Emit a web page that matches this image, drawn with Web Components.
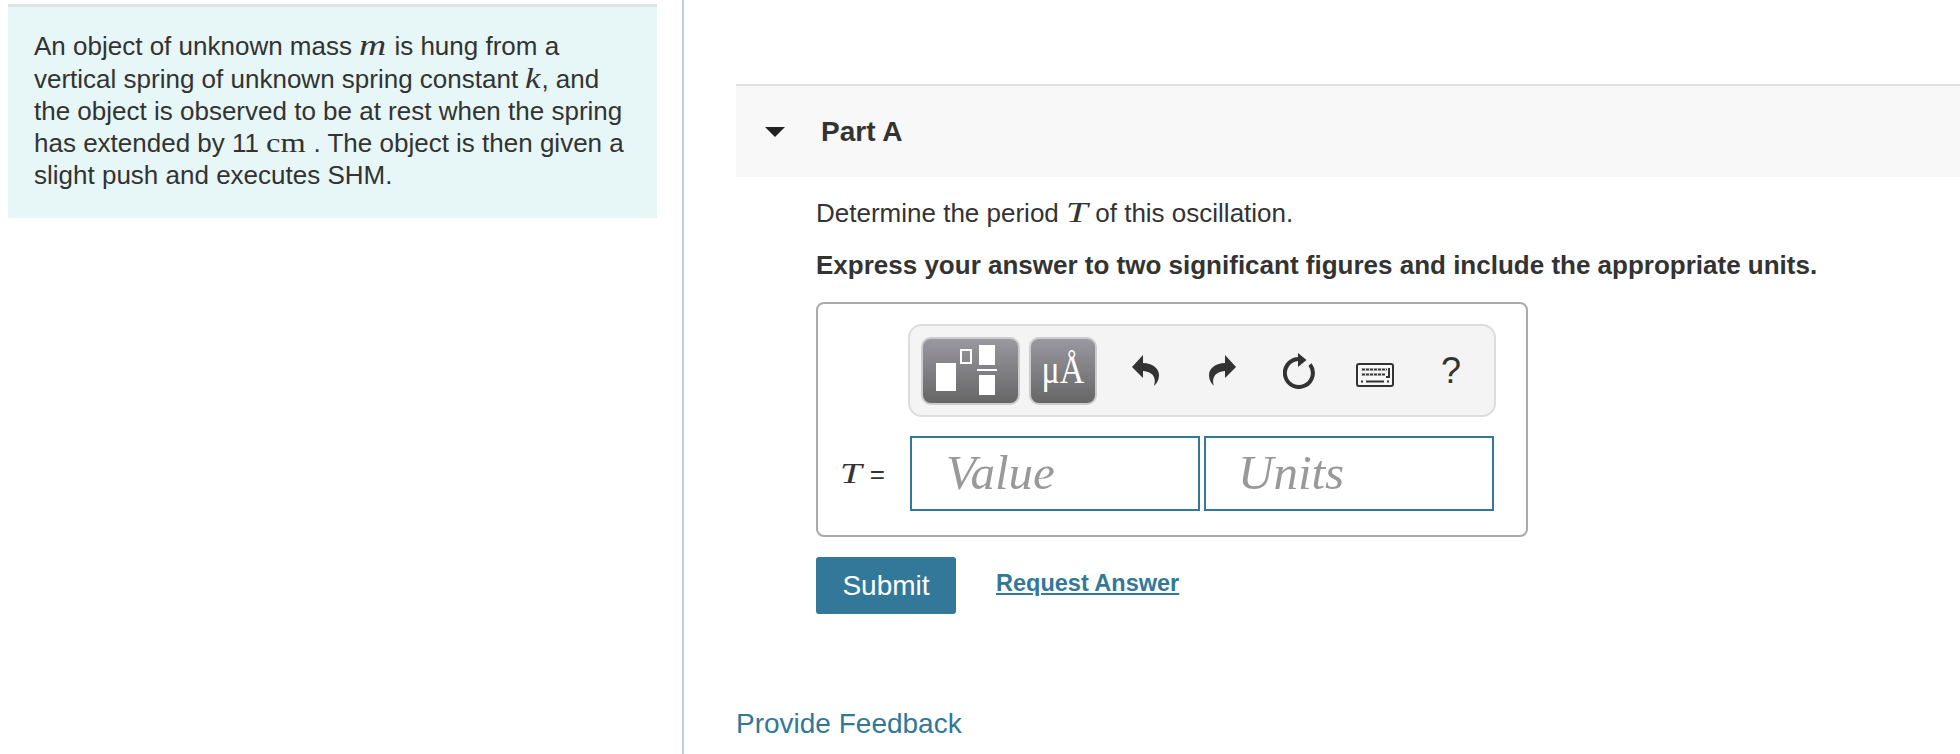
<!DOCTYPE html>
<html>
<head>
<meta charset="utf-8">
<style>
html,body{margin:0;padding:0;background:#fff;height:100%}
body{font-family:"Liberation Sans",Arial,sans-serif;color:#333;overflow:hidden}
</style>
</head>
<body>
<quiz-page>
   <intro-panel slot="left">An object of unknown mass <math-var style="--w:28px;--sx:1.3">m</math-var> is hung from a vertical spring of unknown spring constant <math-var style="--w:16px;--sx:1.2">k</math-var>, and the object is observed to be at rest when the spring has extended by 11 <math-var upright style="--w:40px;--sx:1.2">cm</math-var> . The object is then given a slight push and executes SHM.</intro-panel>
   <part-panel slot="right" title-text="Part A">
      <p-text>Determine the period <math-var style="--w:22px;--sx:1.35">T</math-var> of this oscillation.</p-text>
      <p-text strong>Express your answer to two significant figures and include the appropriate units.</p-text>
      <answer-box></answer-box>
      <action-row></action-row>
   </part-panel>
   <feedback-link slot="right">Provide Feedback</feedback-link>
</quiz-page>
<script>
'use strict'
const quizPageHTML = document.createElement('template')
quizPageHTML.innerHTML = `
   <style>
      :host{display:flex;height:754px;width:1960px}
      .left{flex:none;border-right:2px solid #bccbe2;padding:4px 25px 0 8px;width:649px}
      .right{flex:1;padding:84px 0 0 52px;min-width:0}
   </style>
   <div class='left'><slot name='left'></slot></div>
   <div class='right'><slot name='right'></slot></div>
`
customElements.define('quiz-page', class extends HTMLElement{
   constructor(){
      super()
      this.attachShadow({mode:'open'}).appendChild(quizPageHTML.content.cloneNode(true))
   }
})

const introHTML = document.createElement('template')
introHTML.innerHTML = `
   <style>
      :host{display:block;background:#e7f6f6;border-top:3px solid #dfe3e3;padding:22px 28px 27px 26px;font-size:26px;line-height:32px;color:#333}
   </style>
   <slot></slot>
`
customElements.define('intro-panel', class extends HTMLElement{
   constructor(){
      super()
      this.attachShadow({mode:'open'}).appendChild(introHTML.content.cloneNode(true))
   }
})

// math variables, the original uses a computer modern look so stretch the serif a bit
customElements.define('math-var', class extends HTMLElement{
   constructor(){
      super()
      this.attachShadow({mode:'open'}).innerHTML = `
         <style>
            :host{display:inline-block;width:var(--w);font-family:"Liberation Serif","Times New Roman",serif;font-style:italic;font-size:29px;white-space:nowrap}
            :host([upright]){font-style:normal;font-size:27px}
            span{display:inline-block;transform:scaleX(var(--sx));transform-origin:0 50%}
         </style><span><slot></slot></span>`
   }
})

customElements.define('p-text', class extends HTMLElement{
   constructor(){
      super()
      this.attachShadow({mode:'open'}).innerHTML = `
         <style>
            :host{display:block;font-size:26px;line-height:32px;margin-bottom:20px;color:#333}
            :host([strong]){font-weight:bold;margin-bottom:0}
         </style><slot></slot>`
   }
})

const partHTML = document.createElement('template')
partHTML.innerHTML = `
   <style>
      :host{display:block}
      .head{display:flex;align-items:center;height:91px;background:#f8f8f8;border-top:2px solid #e0e0e0;padding-left:29px}
      .arrow{width:0;height:0;border-left:10px solid transparent;border-right:10px solid transparent;border-top:10px solid #222;margin-right:36px}
      h2{margin:0;font-size:28px;font-weight:bold;color:#333}
      .body{padding:19px 0 0 80px}
   </style>
   <div class='head'><span class='arrow'></span><h2></h2></div>
   <div class='body'><slot></slot></div>
`
customElements.define('part-panel', class extends HTMLElement{
   constructor(){
      super()
      this.attachShadow({mode:'open'}).appendChild(partHTML.content.cloneNode(true))
   }
   connectedCallback(){
      this.shadowRoot.querySelector('h2').textContent = this.getAttribute('title-text')
   }
})

const toolbarHTML = document.createElement('template')
toolbarHTML.innerHTML = `
   <style>
      :host{display:flex;align-items:center;box-sizing:border-box;width:588px;height:93px;background:#f4f4f4;border:2px solid #ddd;border-radius:14px;padding:0 0 0 11px;color:#333}
      .tpl{box-sizing:border-box;height:68px;border:2px solid #ccc;border-radius:10px;background:linear-gradient(#9a98a0,#666);display:block;flex:none}
      .frac{width:99px;margin-right:9px}
      .sym{width:68px;color:#fff;font-family:"Liberation Serif",serif;font-size:34px;display:flex;align-items:flex-end;justify-content:center;line-height:1;padding-bottom:13px}
      .sym span{display:block;transform:scaleY(1.15);transform-origin:50% 100%}
      .ic{flex:none;display:block}
      .help{font-size:36px;color:#333;margin-left:47px;line-height:1}
   </style>
   <svg class='tpl frac' viewBox='0 0 95 64'>
      <rect x='13' y='24' width='20' height='28' fill='#fff'/>
      <rect x='38' y='11' width='10' height='13' fill='none' stroke='#fff' stroke-width='2'/>
      <rect x='56' y='6' width='16' height='20' fill='#fff'/>
      <rect x='54' y='30' width='20' height='2' fill='#fff'/>
      <rect x='56' y='36' width='16' height='20' fill='#fff'/>
   </svg>
   <div class='tpl sym'><span>μÅ</span></div>
   <svg class='ic' style='margin-left:35px' width='27' height='31' viewBox='0 0 27 31'><path d='M0 12 11 0v8c9 0 16 5 16 12 0 5-2 8-5 11 2-6 1-14-11-15v7z' fill='#333'/></svg>
   <svg class='ic' style='margin-left:50px' width='27' height='31' viewBox='0 0 27 31'><path d='M27 12 16 0v8C7 8 0 13 0 20c0 5 2 8 5 11-2-6-1-14 11-15v7z' fill='#333'/></svg>
   <svg class='ic' style='margin-left:47px' width='32' height='36' viewBox='0 0 32 36'><path d='M15 6A14 14 0 1 0 27 11.5' fill='none' stroke='#333' stroke-width='4'/><path d='M15 0l8.500 7L15 14z' fill='#333'/></svg>
   <svg class='ic' style='margin-left:41px;margin-top:9px' width='38' height='24' viewBox='0 0 38 24'><rect x='1' y='1' width='36' height='22' rx='2' fill='#f8f8f8' stroke='#333' stroke-width='2'/><path d='M5 6.500h26M5 11.500h24M5 18.500h2M10 18.500h18M31 18.500h2' stroke='#333' stroke-width='2'/><path d='M5 6.500h26M5 11.500h24' stroke='#f8f8f8' stroke-width='2.200' stroke-dasharray='1 3'/><path d='M33 5v9h-3' fill='none' stroke='#333' stroke-width='2'/></svg>
   <span class='help'>?</span>
`
customElements.define('tool-bar', class extends HTMLElement{
   constructor(){
      super()
      this.attachShadow({mode:'open'}).appendChild(toolbarHTML.content.cloneNode(true))
   }
})

const answerHTML = document.createElement('template')
answerHTML.innerHTML = `
   <style>
      :host{display:block;box-sizing:border-box;width:712px;height:235px;margin-top:21px;border:2px solid #aaa;border-radius:8px;padding:20px 0 0 90px}
      .row{display:flex;align-items:center;margin-top:19px;margin-left:-90px}
      .lab{box-sizing:border-box;width:92px;padding-right:25px;text-align:right;font-size:26px;color:#333;white-space:nowrap}
      .box{box-sizing:border-box;width:290px;height:75px;border:2px solid #337899;margin-right:4px;font-family:"Liberation Serif",serif;font-style:italic;font-size:49px;color:#999;line-height:69px}
      .val{padding-left:34px}
      .uni{padding-left:32px}
   </style>
   <tool-bar></tool-bar>
   <div class='row'>
      <div class='lab'><math-var style="--w:22px;--sx:1.35;margin-right:14px">T</math-var>=</div>
      <div class='box val'>Value</div>
      <div class='box uni'>Units</div>
   </div>
`
customElements.define('answer-box', class extends HTMLElement{
   constructor(){
      super()
      this.attachShadow({mode:'open'}).appendChild(answerHTML.content.cloneNode(true))
   }
})

const actionHTML = document.createElement('template')
actionHTML.innerHTML = `
   <style>
      :host{display:flex;align-items:center;margin-top:20px}
      button{box-sizing:border-box;width:140px;height:57px;border:0;border-radius:3px;background:#337899;color:#fff;font:28px "Liberation Sans",sans-serif;padding:0}
      a{margin-left:40px;margin-top:-4px;color:#337899;font-size:23.500px;font-weight:bold;text-decoration:underline}
   </style>
   <button>Submit</button>
   <a>Request Answer</a>
`
customElements.define('action-row', class extends HTMLElement{
   constructor(){
      super()
      this.attachShadow({mode:'open'}).appendChild(actionHTML.content.cloneNode(true))
   }
})

customElements.define('feedback-link', class extends HTMLElement{
   constructor(){
      super()
      this.attachShadow({mode:'open'}).innerHTML = `
         <style>:host{display:block;margin-top:92px;font-size:28px;line-height:36px;color:#337899}</style><slot></slot>`
   }
})
</script>
</body>
</html>
